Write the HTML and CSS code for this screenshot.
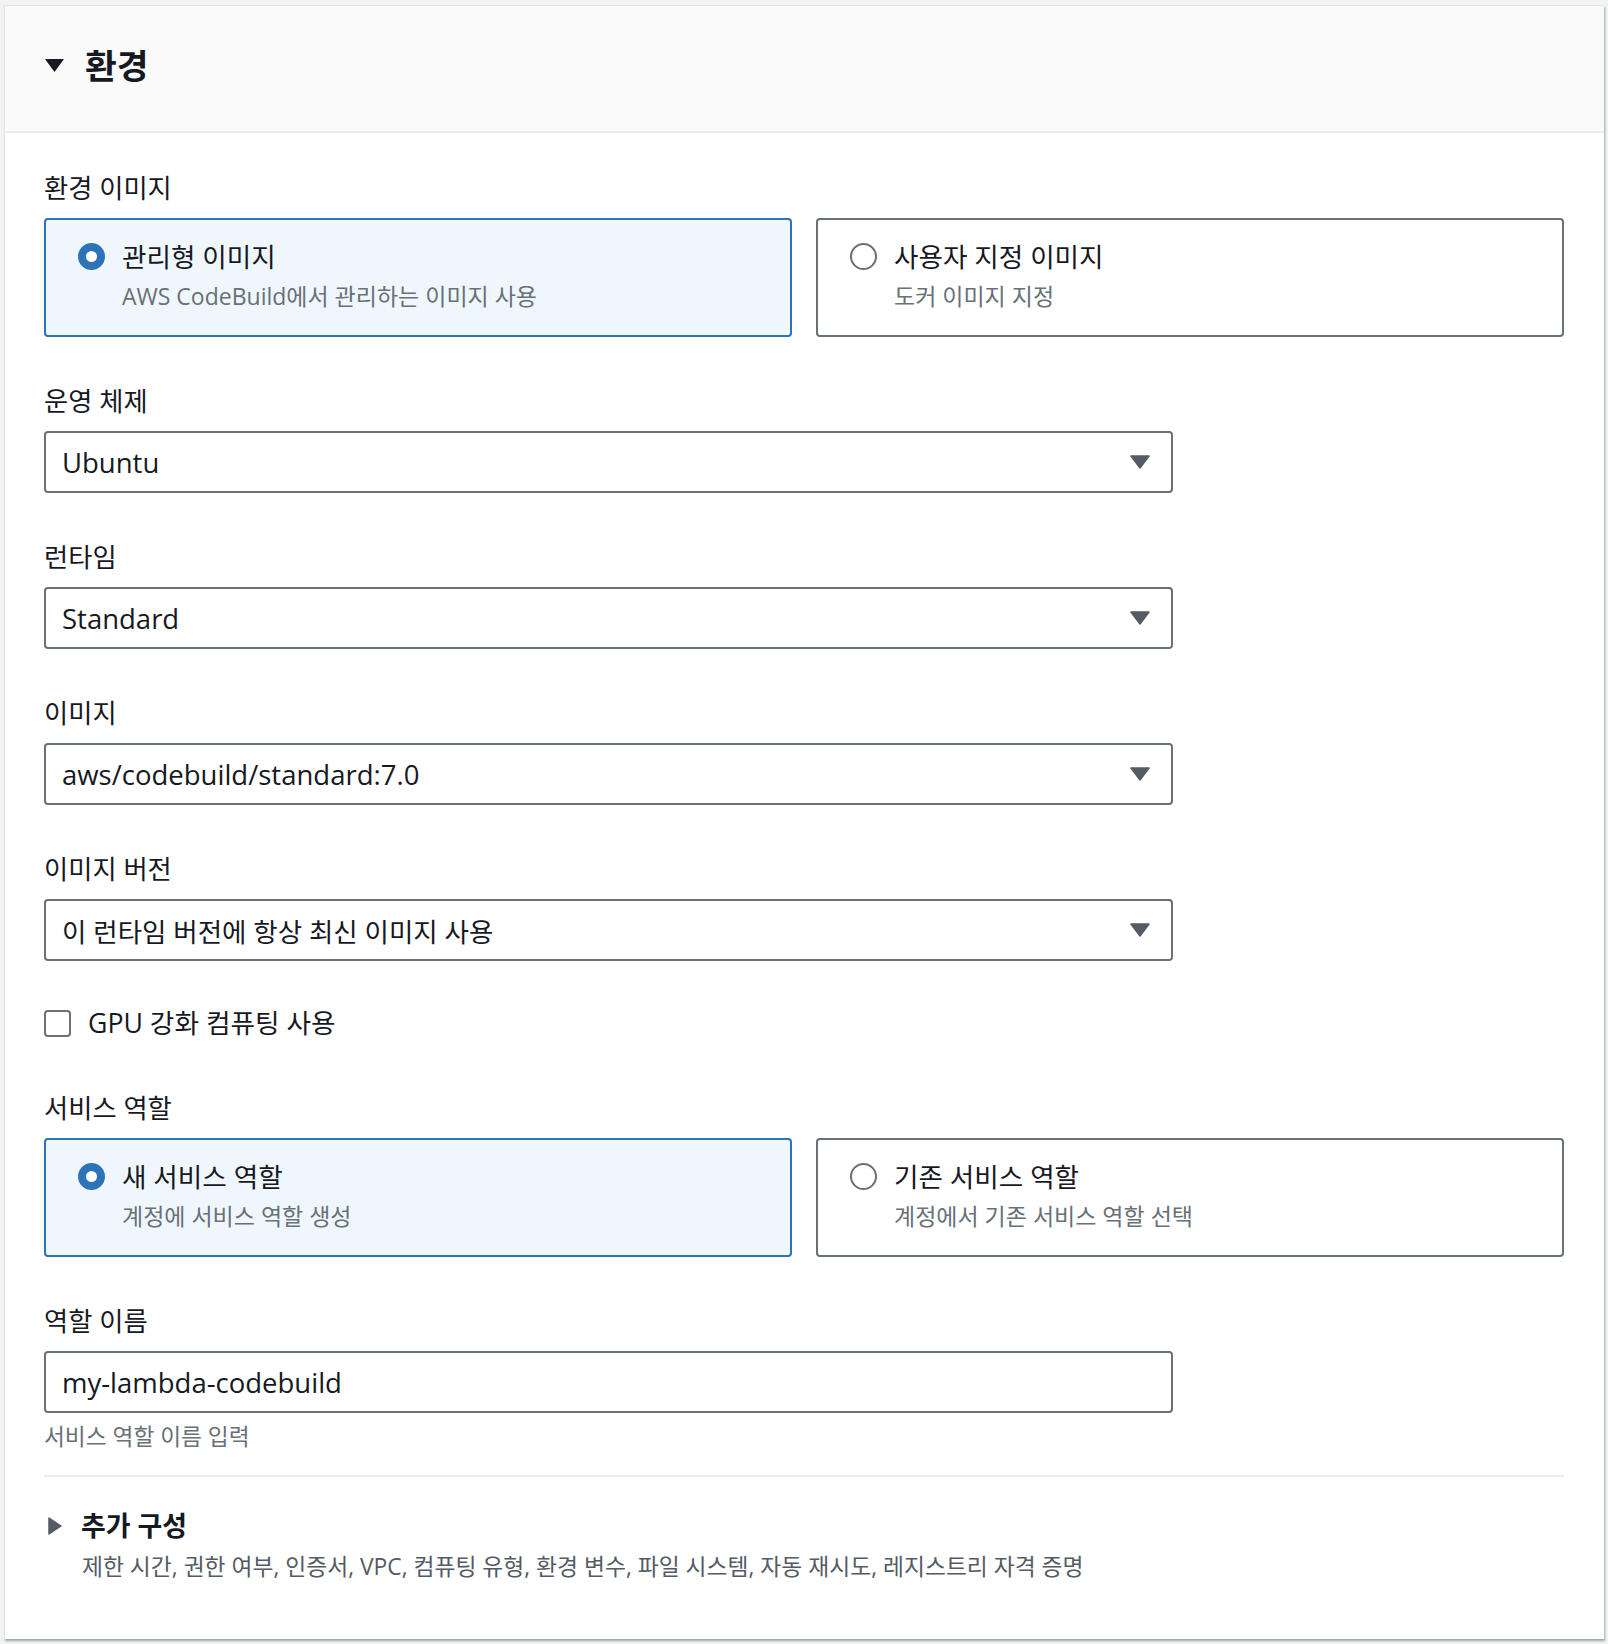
FILE: index.html
```html
<!DOCTYPE html>
<html>
<head>
  <meta charset="utf-8"/>
  <link rel="stylesheet" href="styles.css">
</head>
<body>
  <section class="panel">
    <header class="panel-header">
      <svg class="caret" width="19" height="13" viewBox="0 0 19 13"><polygon points="0,0 19,0 9.5,13" fill="#16191f"/></svg>
      <h2>환경</h2>
    </header>

    <div class="panel-body">
      <div class="field">
        <div class="label">환경 이미지</div>
        <div class="tiles">
          <div class="tile selected">
            <span class="radio on"></span>
            <div class="tile-text">
              <div class="tile-title">관리형 이미지</div>
              <div class="tile-desc">AWS CodeBuild에서 관리하는 이미지 사용</div>
            </div>
          </div>
          <div class="tile">
            <span class="radio"></span>
            <div class="tile-text">
              <div class="tile-title">사용자 지정 이미지</div>
              <div class="tile-desc">도커 이미지 지정</div>
            </div>
          </div>
        </div>
      </div>

      <div class="field">
        <div class="label">운영 체제</div>
        <div class="select">
          <span class="value">Ubuntu</span>
          <svg class="arrow" width="20" height="14" viewBox="0 0 20 14"><polygon points="1,1 19,1 10,13" fill="#545b64" stroke="#545b64" stroke-width="1.5" stroke-linejoin="round"/></svg>
        </div>
      </div>

      <div class="field">
        <div class="label">런타임</div>
        <div class="select">
          <span class="value">Standard</span>
          <svg class="arrow" width="20" height="14" viewBox="0 0 20 14"><polygon points="1,1 19,1 10,13" fill="#545b64" stroke="#545b64" stroke-width="1.5" stroke-linejoin="round"/></svg>
        </div>
      </div>

      <div class="field">
        <div class="label">이미지</div>
        <div class="select">
          <span class="value">aws/codebuild/standard:7.0</span>
          <svg class="arrow" width="20" height="14" viewBox="0 0 20 14"><polygon points="1,1 19,1 10,13" fill="#545b64" stroke="#545b64" stroke-width="1.5" stroke-linejoin="round"/></svg>
        </div>
      </div>

      <div class="field">
        <div class="label">이미지 버전</div>
        <div class="select">
          <span class="value ko">이 런타임 버전에 항상 최신 이미지 사용</span>
          <svg class="arrow" width="20" height="14" viewBox="0 0 20 14"><polygon points="1,1 19,1 10,13" fill="#545b64" stroke="#545b64" stroke-width="1.5" stroke-linejoin="round"/></svg>
        </div>
      </div>

      <div class="check-row">
        <span class="checkbox"></span>
        <span class="check-label">GPU 강화 컴퓨팅 사용</span>
      </div>

      <div class="field">
        <div class="label">서비스 역할</div>
        <div class="tiles">
          <div class="tile selected">
            <span class="radio on"></span>
            <div class="tile-text">
              <div class="tile-title">새 서비스 역할</div>
              <div class="tile-desc">계정에 서비스 역할 생성</div>
            </div>
          </div>
          <div class="tile">
            <span class="radio"></span>
            <div class="tile-text">
              <div class="tile-title">기존 서비스 역할</div>
              <div class="tile-desc">계정에서 기존 서비스 역할 선택</div>
            </div>
          </div>
        </div>
      </div>

      <div class="field">
        <div class="label">역할 이름</div>
        <div class="input">my-lambda-codebuild</div>
        <div class="hint">서비스 역할 이름 입력</div>
      </div>
    </div>

    <div class="expander">
      <div class="expander-head">
        <svg class="caret-right" width="14" height="18" viewBox="0 0 14 18"><polygon points="1,1 13,9 1,17" fill="#545b64" stroke="#545b64" stroke-width="1.5" stroke-linejoin="round"/></svg>
        <span class="expander-title">추가 구성</span>
      </div>
      <div class="expander-desc">제한 시간, 권한 여부, 인증서, VPC, 컴퓨팅 유형, 환경 변수, 파일 시스템, 자동 재시도, 레지스트리 자격 증명</div>
    </div>
  </section>
</body>
</html>
```

FILE: styles.css
```css
body {
  margin: 0;
  padding: 5px 4px 4px;
  background: #f2f3f3;
  font-family: "Open Sans", "Noto Sans CJK KR", sans-serif;
  color: #16191f;
}
.panel {
  background: #fff;
  border: 1px solid #e3e6e7;
  border-bottom: none;
  border-right: none;
  box-shadow: 1px 2px 2px rgba(0, 28, 36, 0.35);
  height: 1634px;
  box-sizing: border-box;
}
.panel-header {
  height: 127px;
  box-sizing: border-box;
  padding: 0 0 6px 40px;
  display: flex;
  align-items: center;
  background: #fafafa;
  border-bottom: 2px solid #eaeded;
}
.caret { margin-right: 21px; }
.panel-header h2 {
  margin: 0;
  font-size: 34.5px;
  font-weight: bold;
  line-height: 40px;
}
.panel-body {
  padding: 35px 40px 0 39px;
  display: flex;
  flex-direction: column;
  gap: 44px;
}
.label {
  font-size: 26.3px;
  line-height: 36px;
  padding-top: 2px;
  margin-bottom: 12px;
}
.tiles {
  display: grid;
  grid-template-columns: 1fr 1fr;
  gap: 24px;
}
.tile {
  height: 119px;
  box-sizing: border-box;
  border: 2px solid #687078;
  border-radius: 4px;
  padding: 19px 20px 0 32px;
  display: flex;
  align-items: flex-start;
  gap: 17px;
}
.tile.selected {
  border-color: #2e73b8;
  background: #f0f7fc;
}
.radio {
  width: 27px;
  height: 27px;
  box-sizing: border-box;
  border-radius: 50%;
  border: 2px solid #687078;
  background: #fff;
  margin-top: 4px;
  flex-shrink: 0;
}
.radio.on {
  border: 8px solid #2e73b8;
}
.tile-title {
  font-size: 26.6px;
  line-height: 36px;
}
.tile-desc {
  font-size: 23px;
  line-height: 30px;
  margin-top: 6px;
  color: #687078;
}
.select, .input {
  width: 1129px;
  height: 62px;
  box-sizing: border-box;
  border: 2px solid #687078;
  border-radius: 4px;
  padding: 0 21px 0 16px;
  display: flex;
  align-items: center;
  justify-content: space-between;
  font-size: 27.5px;
}
.value.ko { font-size: 26.5px; }
.check-row {
  display: flex;
  align-items: center;
  height: 36px;
  gap: 17px;
  margin-bottom: 3px;
}
.checkbox {
  width: 27px;
  height: 27px;
  box-sizing: border-box;
  border: 2px solid #687078;
  border-radius: 4px;
}
.check-label {
  font-size: 26.7px;
  line-height: 36px;
}
.hint {
  margin-top: 9px;
  font-size: 22.7px;
  line-height: 30px;
  color: #687078;
}
.expander {
  margin: 23px 40px 0 39px;
  border-top: 2px solid #eaeded;
  padding-top: 31px;
}
.expander-head {
  display: flex;
  align-items: center;
  height: 36px;
  padding-left: 4px;
  gap: 19px;
}
.expander-title {
  font-size: 26.9px;
  font-weight: bold;
  line-height: 36px;
}
.expander-desc {
  margin-top: 8px;
  padding-left: 38px;
  font-size: 22.8px;
  line-height: 30px;
  color: #545b64;
}
```
